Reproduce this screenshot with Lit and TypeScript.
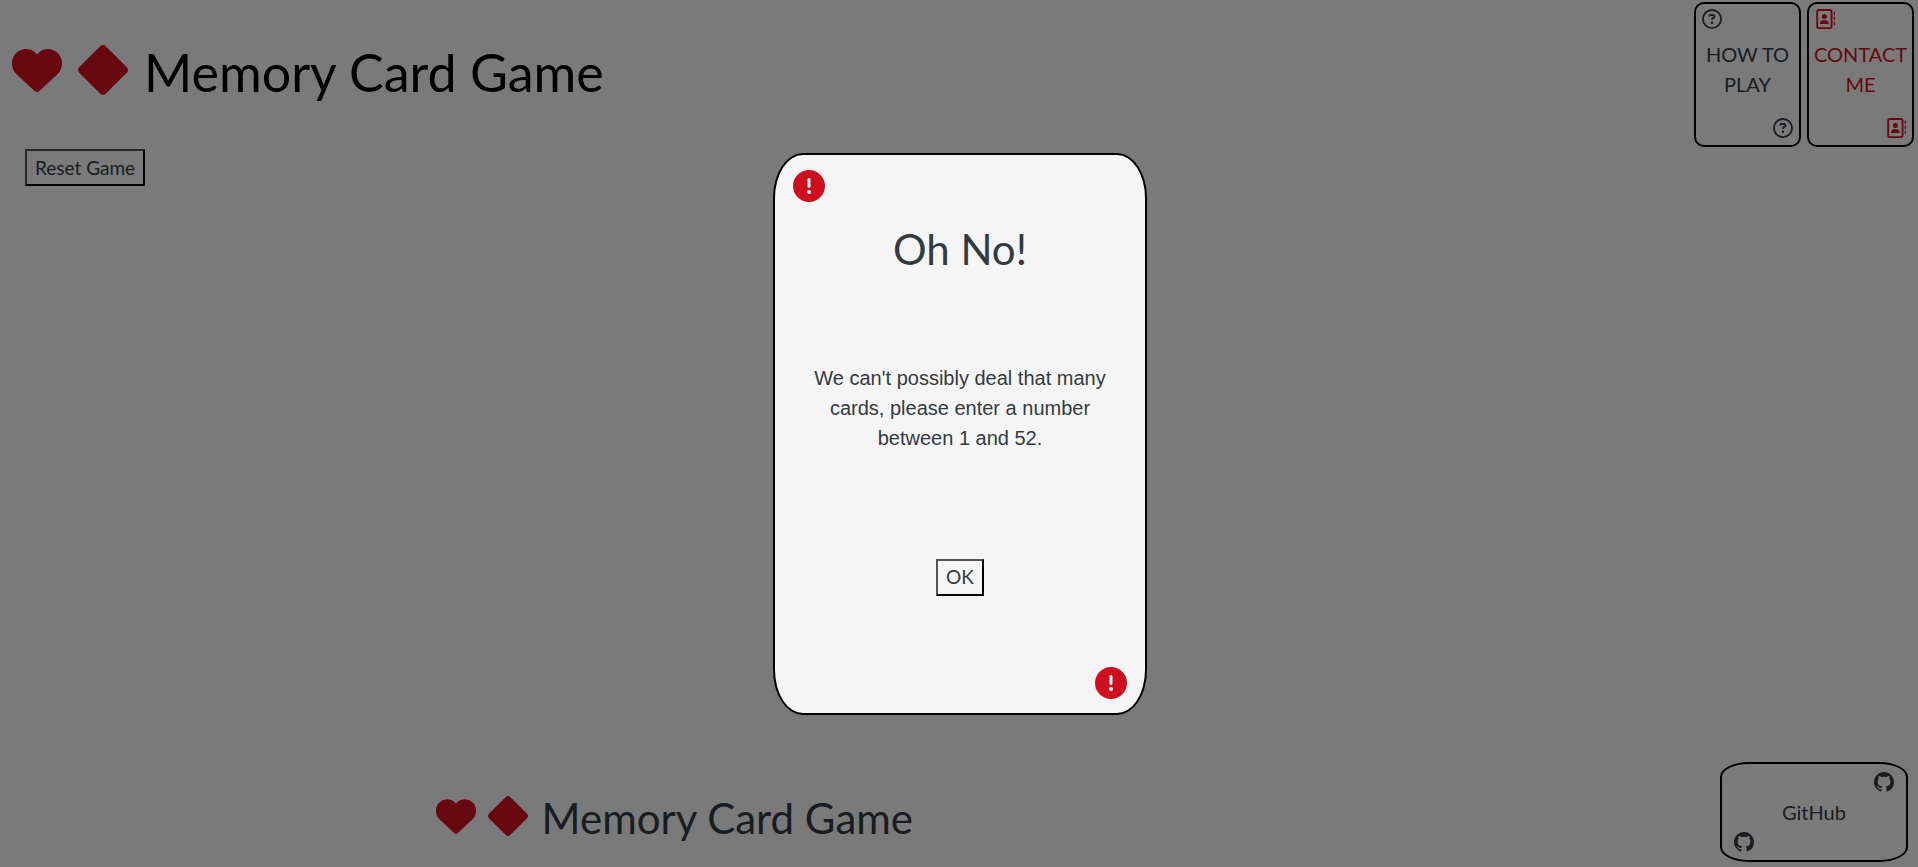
import { LitElement, html, css, svg } from "lit";
import { customElement, property } from "lit/decorators.js";

const icons: Record<string, unknown> = {
  heart: svg`<path d="M47.6 300.4 228.3 469.1c7.5 7 17.4 10.9 27.7 10.9s20.2-3.900 27.700-10.900L464.400 300.400c30.400-28.300 47.600-68 47.600-109.500v-5.800c0-69.900-50.500-129.500-119.400-141C347 36.500 300.600 51.400 268 84L256 96 244 84c-32.600-32.600-79-47.500-124.600-39.900C50.500 55.600 0 115.200 0 185.100v5.800c0 41.500 17.200 81.200 47.600 109.500z"/>`,
  diamond: svg`<path d="M284.300 11.700c-15.600-15.600-40.900-15.600-56.600 0l-216 216c-15.600 15.600-15.600 40.900 0 56.600l216 216c15.600 15.600 40.900 15.600 56.600 0l216-216c15.600-15.600 15.600-40.900 0-56.600l-216-216z"/>`,
  question: svg`<path d="M464 256A208 208 0 1 0 48 256a208 208 0 1 0 416 0zM0 256a256 256 0 1 1 512 0A256 256 0 1 1 0 256zm169.800-90.700c7.900-22.300 29.100-37.300 52.800-37.300h58.300c34.900 0 63.100 28.300 63.100 63.100 0 22.600-12.100 43.500-31.700 54.800L280 264.400c-.2 13-10.900 23.600-24 23.600-13.300 0-24-10.700-24-24v-13.500c0-8.600 4.600-16.500 12.100-20.800l44.300-25.400c4.700-2.700 7.600-7.700 7.600-13.100 0-8.400-6.800-15.100-15.100-15.100h-58.300c-3.400 0-6.400 2.100-7.500 5.300l-.4 1.200c-4.400 12.500-18.200 19-30.600 14.600s-19-18.200-14.600-30.600l.4-1.200zM224 352a32 32 0 1 1 64 0 32 32 0 1 1-64 0z"/>`,
  contact: svg`<path d="M384 48c8.800 0 16 7.200 16 16v384c0 8.800-7.200 16-16 16H96c-8.800 0-16-7.200-16-16V64c0-8.800 7.200-16 16-16h288zM96 0C60.700 0 32 28.700 32 64v384c0 35.300 28.700 64 64 64h288c35.300 0 64-28.700 64-64V64c0-35.300-28.700-64-64-64H96zm144 256a64 64 0 1 0 0-128 64 64 0 1 0 0 128zm-32 32c-44.200 0-80 35.800-80 80 0 8.800 7.200 16 16 16h192c8.800 0 16-7.200 16-16 0-44.200-35.800-80-80-80h-64zM512 80c0-8.800-7.200-16-16-16s-16 7.200-16 16v64c0 8.800 7.200 16 16 16s16-7.200 16-16V80zm-16 112c-8.800 0-16 7.200-16 16v64c0 8.800 7.200 16 16 16s16-7.200 16-16v-64c0-8.800-7.200-16-16-16zm16 144c0-8.800-7.200-16-16-16s-16 7.200-16 16v64c0 8.800 7.200 16 16 16s16-7.200 16-16v-64z"/>`,
  alert: svg`<path d="M256 512A256 256 0 1 0 256 0a256 256 0 1 0 0 512zm0-384c13.300 0 24 10.700 24 24v112c0 13.300-10.700 24-24 24s-24-10.700-24-24V152c0-13.300 10.700-24 24-24zm-32 224a32 32 0 1 1 64 0 32 32 0 1 1-64 0z"/>`,
  github: svg`<path transform="scale(32)" d="M8 0C3.580 0 0 3.580 0 8c0 3.540 2.290 6.530 5.470 7.590.4.070.55-.17.55-.38 0-.19-.01-.82-.01-1.490-2.010.37-2.530-.49-2.690-.94-.09-.23-.48-.94-.82-1.130-.28-.15-.68-.52-.01-.53.63-.01 1.080.58 1.230.82.72 1.210 1.870.87 2.330.66.07-.52.28-.87.51-1.070-1.780-.2-3.640-.89-3.640-3.950 0-.87.31-1.590.82-2.150-.08-.2-.36-1.020.08-2.120 0 0 .67-.21 2.200.82.64-.18 1.320-.27 2-.27s1.360.09 2 .27c1.530-1.040 2.200-.82 2.200-.82.44 1.100.16 1.920.08 2.120.51.56.82 1.270.82 2.150 0 3.070-1.870 3.750-3.650 3.950.29.25.54.73.54 1.480 0 1.070-.01 1.930-.01 2.200 0 .21.15.46.55.38A8.010 8.010 0 0 0 16 8c0-4.420-3.580-8-8-8z"/>`,
};

const icon = (name: string) =>
  html`<svg class="icon ${name}" viewBox="0 0 512 512" aria-hidden="true">${icons[name]}</svg>`;

const shared = css`
  * { box-sizing: border-box; }
  .icon { display: block; width: 20px; height: 20px; fill: currentColor; flex: none; }
`;

@customElement("game-brand")
class GameBrand extends LitElement {
  static styles = [shared, css`
    :host { display: block; }
    .brand { display: flex; align-items: center; }
    .icon { color: #cf0f20; width: 40px; height: 40px; margin-right: 12px; }
    .name { margin: 0 0 0 2px; padding-top: 4px; font-weight: 400; font-size: 42px; line-height: 60px; white-space: nowrap; }
    .large .name { color: #000; font-size: 52px; line-height: 72px; }
    .large .icon { width: 50px; height: 50px; margin-right: 16px; }
    .large .icon.diamond { margin-right: 14px; }
  `];
  @property({ type: Boolean }) large = false;
  render() {
    return html`<div class="brand ${this.large ? "large" : ""}">
      ${icon("heart")}${icon("diamond")}
      ${this.large
        ? html`<h1 class="name">Memory Card Game</h1>`
        : html`<h2 class="name">Memory Card Game</h2>`}
    </div>`;
  }
}

@customElement("app-root")
class AppRoot extends LitElement {
  static styles = [shared, css`
    :host {
      display: block;
      color: #323b42;
      background: #f5f5f5;
      font: 20px/30px Lato, sans-serif;
    }
    .page { display: flex; flex-direction: column; min-height: 100vh; }
    .top { display: flex; justify-content: space-between; padding: 2px 4px 0 12px; }
    .top game-brand { padding-top: 30px; }
    .nav { display: flex; gap: 6px; }
    .link-card {
      display: flex; flex-direction: column; justify-content: space-between;
      width: 107px; height: 145px; padding: 5px 6px 7px;
      border: 2px solid #000; border-radius: 10px;
      color: inherit; text-decoration: none; text-align: center;
    }
    .link-card .icon:last-child, .github-link .icon:first-child { align-self: flex-end; }
    .link-card span { flex: 1; padding-top: 10px; margin: 0 -6px; }
    .red { color: #cf0f20; }
    .main { flex: 1; padding: 2px 25px; }
    .button {
      height: 37px; padding: 0 8px; border: 2px outset #000; border-radius: 0;
      background: transparent; color: inherit; font: 19px/28px Lato, sans-serif;
    }
    .bottom {
      display: grid; grid-template-columns: 7fr 3fr; align-items: center;
      padding: 0 10px 5px;
    }
    .bottom game-brand { justify-self: center; padding-top: 8px; }
    .github-link {
      display: flex; flex-direction: column; justify-content: space-between;
      justify-self: end; width: 188px; height: 100px; padding: 8px 12px;
      border: 2px solid #000; border-radius: 15%;
      color: inherit; text-decoration: none;
    }
    .github-link span { align-self: center; }
    .overlay {
      position: fixed; inset: 0; display: flex; align-items: center; justify-content: center;
      padding-left: 2px; background: rgba(0, 0, 0, 0.5);
    }
    .dialog {
      display: flex; flex-direction: column; align-items: center;
      width: 374px; height: 562px; padding: 15px 18px 14px;
      border: 2px solid #000; border-radius: 8%;
      background: #f5f5f5; text-align: center;
    }
    .dialog .icon { width: 32px; height: 32px; color: #cf0f20; align-self: flex-start; }
    .dialog .icon:last-child { align-self: flex-end; }
    .content {
      flex: 1; display: flex; flex-direction: column; align-items: center;
      justify-content: space-between; padding: 17px 12px 71px;
    }
    .title { margin: 0; font-weight: 400; font-size: 42px; line-height: 60px; }
    .message { margin: 0 0 22px; font-family: "Liberation Sans", Arial, sans-serif; }
  `];

  render() {
    return html`
      <div class="page">
        <header class="top">
          <game-brand large></game-brand>
          <nav class="nav">
            <a class="link-card" href="#how-to-play">${icon("question")}<span>HOW TO PLAY</span>${icon("question")}</a>
            <a class="link-card red" href="#contact">${icon("contact")}<span>CONTACT ME</span>${icon("contact")}</a>
          </nav>
        </header>
        <main class="main"><button class="button" type="button">Reset Game</button></main>
        <footer class="bottom">
          <game-brand></game-brand>
          <a class="github-link" href="#github">${icon("github")}<span>GitHub</span>${icon("github")}</a>
        </footer>
      </div>
      <div class="overlay">
        <section class="dialog" role="dialog" aria-modal="true" aria-labelledby="dialog-title">
          ${icon("alert")}
          <div class="content">
            <h2 class="title" id="dialog-title">Oh No!</h2>
            <p class="message">We can't possibly deal that many cards, please enter a number between 1 and 52.</p>
            <button class="button" type="button">OK</button>
          </div>
          ${icon("alert")}
        </section>
      </div>
    `;
  }
}
